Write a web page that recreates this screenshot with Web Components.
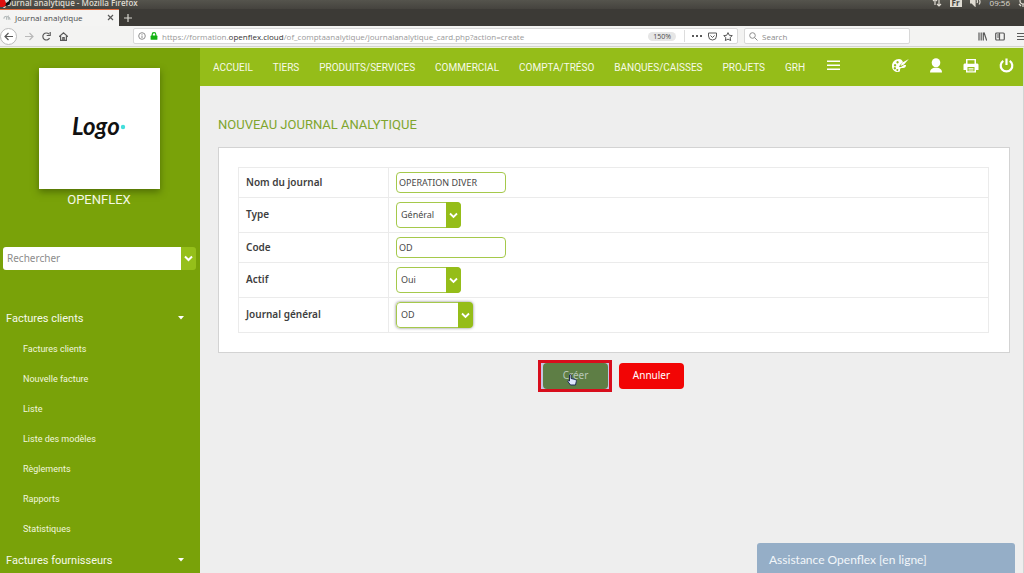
<!DOCTYPE html>
<html lang="fr">
<head>
<meta charset="utf-8">
<title>Journal analytique</title>
<style>
  html, body { margin: 0; height: 100%; }
  body { overflow: hidden; background: #eee; font-family: Roboto, sans-serif; }
</style>
</head>
<body>
<app-window>
  <browser-bar slot="chrome"></browser-bar>
  <side-panel slot="side" name="OPENFLEX">
    <nav-group label="Factures clients">
      <nav-entry>Factures clients</nav-entry>
      <nav-entry>Nouvelle facture</nav-entry>
      <nav-entry>Liste</nav-entry>
      <nav-entry>Liste des modèles</nav-entry>
      <nav-entry>Règlements</nav-entry>
      <nav-entry>Rapports</nav-entry>
      <nav-entry>Statistiques</nav-entry>
    </nav-group>
    <nav-group label="Factures fournisseurs"></nav-group>
  </side-panel>
  <top-nav>
    <top-link>ACCUEIL</top-link>
    <top-link>TIERS</top-link>
    <top-link>PRODUITS/SERVICES</top-link>
    <top-link>COMMERCIAL</top-link>
    <top-link>COMPTA/TRÉSO</top-link>
    <top-link>BANQUES/CAISSES</top-link>
    <top-link>PROJETS</top-link>
    <top-link>GRH</top-link>
  </top-nav>
  <journal-form heading="NOUVEAU JOURNAL ANALYTIQUE"></journal-form>
  <help-chat slot="overlay">Assistance Openflex [en ligne]</help-chat>
</app-window>

<script>
const define = (name, html, setup) => customElements.define(name, class extends HTMLElement {
  constructor() {
    super();
    this.attachShadow({ mode: 'open' }).innerHTML = html;
  }
  connectedCallback() { if (setup) setup(this, this.shadowRoot); }
});

define('app-window', `
  <style>
    :host { display: flex; flex-direction: column; height: 100vh; position: relative; overflow: hidden; }
    .body { flex: 1; min-height: 0; display: grid; grid-template-columns: 200px 1fr; }
    main { min-width: 0; background: #eee; border-right: 1px solid #d4d4d4; }
    ::slotted([slot="overlay"]) { position: absolute; right: 9px; bottom: 0; }
  </style>
  <slot name="chrome"></slot>
  <div class="body"><slot name="side"></slot><main><slot></slot></main></div>
  <slot name="overlay"></slot>`);

define('browser-bar', `
  <style>
    :host { display: block; font-family: "Open Sans", "Noto Sans", sans-serif; font-size: 8px; color: #4a4a4a; overflow: hidden; background: #3c3a36; }
    svg { display: block; flex: none; fill: none; stroke: #5a5a5a; stroke-width: 1.2; }
    button { all: unset; display: flex; flex: none; }
    .title { height: 9px; display: flex; align-items: flex-start; justify-content: space-between; padding: 0 0 0 2px; background: linear-gradient(#55544d, #45433e); color: #dfdbd2; }
    .title b { font-size: 8px; line-height: 5px; font-weight: 600; }
    .app { display: flex; }
    .app svg { margin: 0 -8px 0 -2px; z-index: 1; stroke: none; }
    .tray { display: flex; gap: 8px; align-items: flex-start; line-height: 5px; }
    .tray svg { stroke: #dfdbd2; }
    .tray i { font-style: normal; background: #dfdbd2; color: #45433e; font-weight: bold; padding: 0 2px 2px; }
    .tabs { height: 17px; display: flex; align-items: stretch; }
    .tab { width: 119px; display: flex; align-items: center; gap: 4px; padding: 0 5px 2px 3px; background: #f4f4f3; border-top: 1px solid #e2683c; box-sizing: border-box; }
    .tab span { flex: 1; white-space: nowrap; }
    .plus { margin: auto 5px; }
    .plus svg { stroke: #d8d6d0; }
    .tools { height: 20px; border-bottom: 1px solid #d4d4cf; display: flex; align-items: center; background: #f3f3f2; gap: 8px; }
    .back { width: 17px; height: 17px; box-sizing: border-box; border-radius: 50%; border: 1px solid #bbb; background: #fff; align-items: center; justify-content: center; }
    .box { height: 16px; box-sizing: border-box; background: #fff; border: 1px solid #d8d8d8; border-radius: 2px; display: flex; align-items: center; gap: 4px; padding: 0 4px; }
    .url { flex: 1; min-width: 0; margin-left: 57px; }
    .url p { margin: 0; flex: 1; color: #999; white-space: nowrap; overflow: hidden; }
    .url p b { color: #333; font-weight: 400; }
    .zoom { background: #e6e6e6; border-radius: 5px; padding: 0 5px; margin-right: 4px; font-size: 7px; line-height: 9px; }
    .tail { display: flex; align-items: center; gap: 5px; border-left: 1px solid #ddd; padding-left: 7px; height: 12px; }
    .find { width: 166px; margin-left: -2px; }
    .find input { all: unset; flex: 1; min-width: 0; font-size: 8px; color: #555; }
    .find input::placeholder { color: #8a8a8a; }
    .end { display: flex; gap: 8px; margin-left: 60px; }
    .edge { border-bottom: 1px solid #edf3dc; background: #f3f3f2; }
  </style>
  <div class="title">
    <span class="app"><svg width="12" height="9" viewBox="0 0 12 9"><circle cx="5" cy="0" r="6" fill="#111"/><circle cx="2" cy="3" r="4" fill="#e01010"/><path d="M4 -2h5v3l-3 2z" fill="#ddd"/></svg><b>Journal analytique - Mozilla Firefox</b></span>
    <span class="tray">
      <svg width="10" height="7" viewBox="0 0 10 7"><path d="M3 5V0M1 1l2-2 2 2M7 0v5M5 4l2 2 2-2"/></svg>
      <i>Fr</i>
      <svg width="12" height="7" viewBox="0 0 12 7"><path d="M0 0h2l3-2v8L2 3H0z" fill="#dfdbd2"/><path d="M7 0q1 1.500 0 3M9-1q2 3 0 5.500"/></svg>
      <span>09:56</span>
      <svg width="6" height="7" viewBox="0 0 6 7"><circle cx="5" cy="1" r="3"/><path d="M1 4l2 2M5 4v3"/></svg>
    </span>
  </div>
  <div class="tabs">
    <div class="tab">
      <svg width="8" height="9" viewBox="0 0 9 9" style="stroke:#b5bbbb"><path d="M1 6q0-3 3-3M4 7V4l2-1v4M7 4l1 3"/></svg>
      <span>Journal analytique</span>
      <button aria-label="Fermer l'onglet"><svg width="7" height="7" viewBox="0 0 7 7"><path d="M1 1l5 5M6 1L1 6"/></svg></button>
    </div>
    <button class="plus" aria-label="Nouvel onglet"><svg width="8" height="8" viewBox="0 0 8 8"><path d="M4 0v8M0 4h8"/></svg></button>
  </div>
  <div class="tools">
    <button class="back" aria-label="Précédent"><svg width="9" height="9" viewBox="0 0 9 9"><path d="M9 4.500H1M4.500 1L1 4.500 4.500 8"/></svg></button>
    <button aria-label="Suivant"><svg width="9" height="9" viewBox="0 0 9 9" style="stroke:#b9b9b9"><path d="M0 4.500h8M4.500 1L8 4.500 4.500 8"/></svg></button>
    <button aria-label="Actualiser"><svg width="9" height="9" viewBox="0 0 9 9"><path d="M7.500 6A3.500 3.500 0 1 1 7 2.200M8.200 0v3.500H4.700"/></svg></button>
    <button aria-label="Accueil"><svg width="9" height="9" viewBox="0 0 9 9"><path d="M0 4.700L4.500 .8 9 4.700M1.600 4v4.300h5.800V4M3.800 8V5.500h1.400V8"/></svg></button>
    <div class="box url">
      <svg width="8" height="8" viewBox="0 0 8 8" style="stroke:#8d8d8d;stroke-width:1"><circle cx="4" cy="4" r="3.300"/><path d="M4 3.500V6M4 2v.8"/></svg>
      <svg width="8" height="8" viewBox="0 0 8 8" style="stroke:#12b212"><path d="M2.200 4V2.500a1.800 1.800 0 0 1 3.600 0V4"/><rect x=".6" y="3.600" width="6.800" height="4.200" rx=".6" fill="#12b212" stroke="none"/></svg>
      <p>https://formation.<b>openflex.cloud</b>/of_comptaanalytique/journalanalytique_card.php?action=create</p>
      <span class="zoom">150%</span>
      <span class="tail">
        <svg width="10" height="8" viewBox="0 0 10 8"><path d="M0 4h2M4 4h2M8 4h2" stroke-width="2"/></svg>
        <svg width="11" height="9" viewBox="0 0 11 9" style="stroke-width:1"><path d="M1.500 1h8v3q0 4-4 4t-4-4zM3.500 3.500l2 2 2-2"/></svg>
        <svg width="10" height="9" viewBox="0 0 10 9" style="stroke-width:1"><path d="M5 .6l1.300 2.700 3 .3-2.200 2 .6 3L5 7.100 2.300 8.600l.6-3-2.200-2 3-.3z"/></svg>
      </span>
    </div>
    <div class="box find">
      <svg width="9" height="9" viewBox="0 0 9 9" style="stroke:#8d8d8d;stroke-width:1"><circle cx="3.500" cy="3.500" r="2.800"/><path d="M5.500 5.500L8.500 8.500"/></svg>
      <input placeholder="Search" aria-label="Search">
    </div>
    <div class="end">
      <svg width="9" height="9" viewBox="0 0 9 9"><path d="M1 .5v8M3.200 .5v8M5.300 .5v8M6 .5l2.700 8"/></svg>
      <svg width="10" height="9" viewBox="0 0 10 9"><rect x=".7" y="1" width="8.600" height="7" rx="1"/><path d="M4.500 1v7M2 3h2M2 5h2"/></svg>
      <svg width="8" height="9" viewBox="0 0 8 9" style="margin-left:3px"><path d="M1 1.500h8M1 4.500h8M1 7.500h8"/></svg>
    </div>
  </div>
  <div class="edge"></div>`);

define('side-panel', `
  <style>
    :host { display: block; background: #79a209; color: #f4f8e6; overflow: hidden; }
    .logo { width: 121px; margin: 20px auto 0; aspect-ratio: 1; background: #fff; box-shadow: 0 3px 7px rgba(40,60,0,.5); }
    .logo svg { display: block; width: 100%; height: 100%; }
    .brand { padding-right: 2px; }
    h2 { margin: 2px 0 0; font-size: 13px; line-height: 18px; font-weight: 400; text-align: center; }
    form { display: flex; margin: 38px 4px 34px 3px; height: 23px; border-radius: 3px; overflow: hidden; }
    input { flex: 1; min-width: 0; border: 0; padding: 0 4px 1px; font: 10px "Noto Sans", sans-serif; background: #fff; outline: 0; color: #444; }
    input::placeholder { color: #8c8c8c; }
    button { border: 0; width: 15px; padding: 0; background: #95bf1a; display: flex; align-items: center; justify-content: center; }
  </style>
  <div class="brand">
    <div class="logo"><svg viewBox="0 0 121 121" role="img" aria-label="Logo">
      <text x="33" y="67" font-family="Lato, sans-serif" font-style="italic" font-weight="700" font-size="24" fill="#111">Logo</text>
      <circle cx="84" cy="59" r="2.200" fill="#43dfdc"/></svg></div>
    <h2></h2>
  </div>
  <form><input placeholder="Rechercher" aria-label="Rechercher"><button type="button" aria-label="Choisir la recherche"><svg width="9" height="7" viewBox="0 0 9 7" fill="none" stroke="#fff" stroke-width="2"><path d="M1 1.500l3.500 3.500L8 1.500"/></svg></button></form>
  <nav><slot></slot></nav>`,
  (el, root) => { root.querySelector('h2').textContent = el.getAttribute('name'); });

define('nav-group', `
  <style>
    :host { display: block; }
    button { all: unset; box-sizing: border-box; width: 100%; height: 28px; padding: 0 16px 0 6px; display: flex; align-items: center; justify-content: space-between; font-size: 11px; color: #f6f9ea; }
    .items { padding: 2px 0; }
  </style>
  <button aria-expanded="true"><span></span><svg width="6" height="4" viewBox="0 0 6 4" fill="#fff"><path d="M0 0h6L3 3.500z"/></svg></button>
  <div class="items"><slot></slot></div>`,
  (el, root) => { root.querySelector('span').textContent = el.getAttribute('label'); });

define('nav-entry', `
  <style>
    :host { display: block; }
    a { display: flex; align-items: center; height: 30px; padding-left: 23px; font-size: 9px; color: #f1f6df; text-decoration: none; }
  </style>
  <a href="#"><slot></slot></a>`);

define('top-nav', `
  <style>
    :host { display: flex; align-items: center; height: 38px; box-sizing: border-box; background: #95bd19; padding: 0 9px 4px 13px; }
    nav { display: flex; gap: 20px; padding-top: 5px; }
    svg { display: block; fill: #fff; }
    button { all: unset; display: block; }
    .menu { margin-left: 22px; }
    .icons { display: flex; align-items: center; gap: 20px; margin-left: auto; }
  </style>
  <nav><slot></slot></nav>
  <button class="menu" aria-label="Menu"><svg width="13" height="13" viewBox="0 0 13 13"><path d="M0 1.500h13v1.500H0zM0 5.500h13v1.500H0zM0 9.500h13v1.500H0z"/></svg></button>
  <div class="icons">
    <button aria-label="Thème"><svg width="17" height="15" viewBox="0 0 17 15"><path fill-rule="evenodd" d="M7 1C3 1 0 4 0 8s3 6 6 6c2 0 2-1 2-2 0-2 1-2 3-2 2 0 3-1 3-3l-2 0-3 2-2 0 1-2 3-3C10 2 9 1 7 1zM3 6a1.200 1.200 0 1 0 .1 0zM5.500 3a1.200 1.200 0 1 0 .1 0zM2.800 9a1.200 1.200 0 1 0 .1 0zM5.300 11a1 1 0 1 0 .1 0z"/><path d="M16.800 1L12 6.500 8.500 8l1.500-3.200z"/></svg></button>
    <button aria-label="Compte"><svg width="14" height="15" viewBox="0 0 14 15"><ellipse cx="7" cy="4.800" rx="4.300" ry="4.500"/><path d="M1 14.500q0-3.700 4-4.800h4q4 1.100 4 4.800z"/></svg></button>
    <button aria-label="Imprimer"><svg width="16" height="15" viewBox="0 0 16 15"><path fill-rule="evenodd" d="M3 1h10v4.500h1.500l1 1V12H13v2.500H3V12H.5V6.500l1-1H3zM4.500 2.300v3.500h7V2.300zM4.500 9v4.200h7V9zM5.500 10h5v.8h-5zM5.500 11.600h5v.8h-5z"/></svg></button>
    <button aria-label="Déconnexion"><svg width="15" height="15" viewBox="0 0 15 15"><path d="M4.300 2.800a5.800 5.800 0 1 0 6.400 0M7.500 .5v6.500" fill="none" stroke="#fff" stroke-width="2.200"/></svg></button>
  </div>`);

define('top-link', `
  <style>
    :host { display: block; }
    a { display: block; font-size: 10px; line-height: 14px; color: #f7fae8; text-decoration: none; white-space: nowrap; }
  </style>
  <a href="#"><slot></slot></a>`);

define('journal-form', `
  <style>
    :host { display: block; padding: 30px 13px 0 18px; font-family: "Noto Sans", "Open Sans", sans-serif; color: #444; }
    h1 { margin: 0 0 13px; font: 400 13px/18px Roboto, sans-serif; color: #7fa52d; }
    .card { background: #fff; border: 1px solid #d3d3d3; padding: 19px 20px 19px 19px; }
    table { width: 100%; border-collapse: collapse; }
    th, td { border: 1px solid #ebebeb; padding: 4px 7px; }
    th { width: 135px; padding-bottom: 6px; text-align: left; font-size: 10px; line-height: 16px; color: #3e3e3e; font-weight: 600; vertical-align: middle; }
    input, select { box-sizing: border-box; border: 1px solid #a5c94b; border-radius: 4px; background: #fff; font: 9px "Noto Sans", sans-serif; color: #484848; outline: 0; display: block; }
    input { width: 110px; height: 21px; padding: 0 2px 1px; }
    .drop { position: relative; display: block; width: 65px; height: 26px; border-radius: 4px; }
    .drop.wide { width: 77px; box-shadow: 0 0 3px rgba(0,0,0,.5); }
    select { appearance: none; width: 100%; height: 100%; padding: 0 16px 1px 4px; }
    .drop span { position: absolute; inset: 0 0 0 auto; width: 15px; border-radius: 0 4px 4px 0; background: #95bd19; display: flex; align-items: center; justify-content: center; pointer-events: none; }
    .actions { display: flex; justify-content: center; align-items: center; gap: 7px; margin-top: 7px; padding-right: 6px; }
    .actions button { border: 0; width: 65px; height: 26px; border-radius: 4px; padding: 0 0 2px; font: 10px "Noto Sans", sans-serif; color: #fff; background: #f20505; }
    .focus { border: 3px solid #d80d1c; background: #c4c6e2; padding: 0 1px 0 2px; position: relative; display: flex; }
    .focus button { background: #5e7e45; color: #b8c7b8; }
    .hand { position: absolute; left: 26px; top: 11px; }
  </style>
  <h1></h1>
  <form onsubmit="return false">
    <div class="card"><table>
      <tr><th><label for="nom">Nom du journal</label></th><td><input id="nom" value="OPERATION DIVER"></td></tr>
      <tr><th><label for="type">Type</label></th><td><div class="drop"><select id="type"><option>Général</option></select><span></span></div></td></tr>
      <tr><th><label for="code">Code</label></th><td><input id="code" value="OD"></td></tr>
      <tr><th><label for="actif">Actif</label></th><td><div class="drop"><select id="actif"><option>Oui</option><option>Non</option></select><span></span></div></td></tr>
      <tr><th><label for="general">Journal général</label></th><td><div class="drop wide"><select id="general"><option>OD</option></select><span></span></div></td></tr>
    </table></div>
    <div class="actions">
      <div class="focus"><button>Créer</button>
        <svg class="hand" width="10" height="12" viewBox="0 0 10 12"><path d="M2.500 1q1-1 1.600 0v3.500l4.400 1q1 .5 .8 2L8.500 11h-5L.8 7.500q0-1.200 1.700-.5z" fill="#dfe6ff" stroke="#1f2c58" stroke-width="1"/></svg>
      </div>
      <button type="button">Annuler</button>
    </div>
  </form>`,
  (el, root) => {
    root.querySelector('h1').textContent = el.getAttribute('heading');
    root.querySelectorAll('.drop span').forEach(s => {
      s.innerHTML = '<svg width="9" height="7" viewBox="0 0 9 7" fill="none" stroke="#fff" stroke-width="1.800"><path d="M1 1.500l3.500 3.500L8 1.500"/></svg>';
    });
  });

define('help-chat', `
  <style>
    :host { display: block; width: 258px; }
    button { all: unset; box-sizing: border-box; display: block; width: 100%; padding: 8px 12px 4px; font: 12px/18px Lato, sans-serif; color: #f2f6fa; background: #95aec7; border-radius: 3px 3px 0 0; }
  </style>
  <button><slot></slot></button>`);
</script>
</body>
</html>
